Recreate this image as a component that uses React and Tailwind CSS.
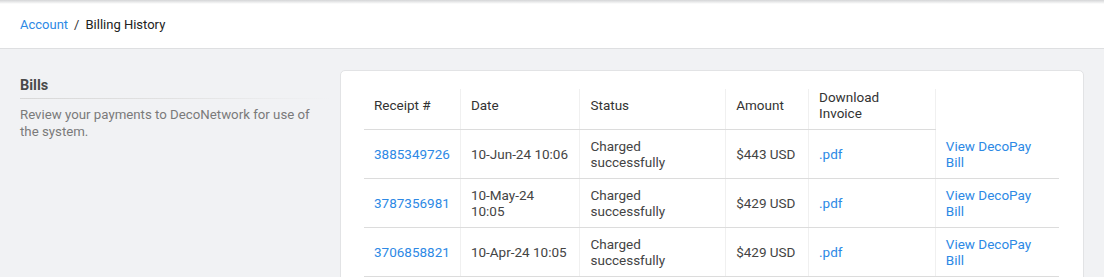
import React from "react";

const rows = [
  { id: "3885349726", date: "10-Jun-24 10:06", amount: "$443 USD" },
  { id: "3787356981", date: "10-May-24 10:05", amount: "$429 USD" },
  { id: "3706858821", date: "10-Apr-24 10:05", amount: "$429 USD" },
];

export default function App() {
  return (
    <div
      className="min-h-[277px] bg-[#f1f2f4] text-[13.5px] leading-4 text-[#444]"
      style={{ fontFamily: "Roboto, 'Liberation Sans', Arial, sans-serif" }}
    >
      <div className="relative h-[49px] bg-white border-b border-[#dedfe1] flex items-center px-5">
        <div className="absolute left-0 right-0 top-0 h-[4px] bg-gradient-to-b from-[#d4d5d7] to-white" />
        <div className="flex items-center pt-[2px] text-[13px]">
          <a className="text-[#2d89e5]">Account</a>
          <span className="mx-[6px] text-[#333]">/</span>
          <span className="text-[#222]">Billing History</span>
        </div>
      </div>

      <div className="flex pt-[21px] pl-5 pr-5">
        <div className="w-[320px] shrink-0 pt-[6px] pr-[10px]">
          <div className="text-[14.5px] leading-5 font-bold text-[#4a4a4a]">Bills</div>
          <div className="mt-[2px] h-[1px] bg-gradient-to-r from-[#d8d8d8] via-[#e2e2e2] to-transparent" />
          <div className="mt-[7px] text-[13.25px] leading-[17px] text-[#7a7a7a] pr-1">
            Review your payments to DecoNetwork for use of the system.
          </div>
        </div>

        <div className="flex-1 bg-white border border-[#e2e3e5] rounded-[5px] pl-[23px] pr-[24px] pt-[18px] pb-4">
          <table className="border-collapse text-left">
            <thead>
              <tr className="text-[#333]">
                <th className="w-[95px] font-normal px-[10px] pb-2 pt-0 border-b border-[#dcdcdc] align-middle">Receipt #</th>
                <th className="w-[120px] font-normal px-[10px] pb-2 pt-0 border-b border-l border-b-[#dcdcdc] border-l-[#f0f0f0] align-middle">Date</th>
                <th className="w-[146px] font-normal px-[10px] pb-2 pt-0 border-b border-l border-b-[#dcdcdc] border-l-[#f0f0f0] align-middle">Status</th>
                <th className="w-[83px] font-normal px-[10px] pb-2 pt-0 border-b border-l border-b-[#dcdcdc] border-l-[#f0f0f0] align-middle">Amount</th>
                <th className="w-[127px] font-normal px-[10px] pb-2 pt-0 border-b border-l border-b-[#dcdcdc] border-l-[#f0f0f0] align-middle">
                  Download
                  <br />
                  Invoice
                </th>
                <th className="w-[124px] font-normal px-[10px] pb-2 pt-0 border-l border-l-[#f0f0f0]"></th>
              </tr>
            </thead>
            <tbody>
              {rows.map((r) => (
                <tr key={r.id} className="align-middle">
                  <td className="h-[49px] px-[10px] py-2 border-b border-[#dcdcdc]">
                    <a className="text-[#2d89e5]">{r.id}</a>
                  </td>
                  <td className="px-[10px] py-2 border-b border-l border-b-[#dcdcdc] border-l-[#f0f0f0]">{r.date}</td>
                  <td className="px-[10px] py-2 border-b border-l border-b-[#dcdcdc] border-l-[#f0f0f0]">
                    Charged
                    <br />
                    successfully
                  </td>
                  <td className="px-[10px] py-2 border-b border-l border-b-[#dcdcdc] border-l-[#f0f0f0]">{r.amount}</td>
                  <td className="px-[10px] py-2 border-b border-l border-b-[#dcdcdc] border-l-[#f0f0f0]">
                    <a className="text-[#2d89e5]">.pdf</a>
                  </td>
                  <td className="px-[10px] py-2 border-b border-l border-b-[#dcdcdc] border-l-[#f0f0f0]">
                    <a className="text-[#2d89e5]">
                      View DecoPay
                      <br />
                      Bill
                    </a>
                  </td>
                </tr>
              ))}
            </tbody>
          </table>
        </div>
      </div>
    </div>
  );
}
